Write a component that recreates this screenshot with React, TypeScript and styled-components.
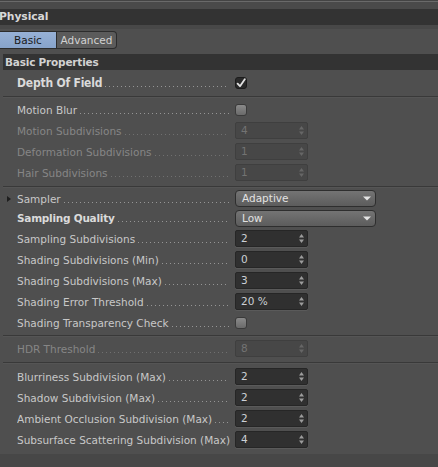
import React from "react";
import styled, { createGlobalStyle, css } from "styled-components";

const Global = createGlobalStyle`
  html, body { margin: 0; padding: 0; background: #4f4f4f; }
  body { font-family: "DejaVu Sans", "Lucida Grande", sans-serif; }
`;

const Panel = styled.div`
  width: 438px;
  height: 467px;
  background: #4f4f4f;
  display: flex;
  flex-direction: column;
  overflow: hidden;
  font-family: "DejaVu Sans", "Lucida Grande", sans-serif;
  font-size: 10.5px;
  color: #c6c6c6;
`;

const TopStrip = styled.div`
  height: 9px;
  flex: none;
  background: linear-gradient(#444 0 1px, #6a6a6a 1px 2px, #4a4a4a 2px);
`;

const PanelTitle = styled.div`
  height: 16px;
  flex: none;
  background: #333;
  color: #d8d8d8;
  font-weight: bold;
  font-size: 10.8px;
  line-height: 16px;
  text-indent: -1px;
  letter-spacing: -0.1px;
`;

const TitleShadow = styled.div`
  height: 4px;
  flex: none;
  background: #484848;
`;

const TabBar = styled.div`
  height: 25px;
  flex: none;
  box-sizing: border-box;
  padding-top: 2px;
  display: flex;
  align-items: flex-start;
`;

const Tab = styled.div<{ $active?: boolean }>`
  height: 18px;
  box-sizing: border-box;
  line-height: 16px;
  border: 1px solid #2c2c2c;
  text-align: center;
  ${(p) =>
    p.$active
      ? css`
          width: 57px;
          background: linear-gradient(#97b1d6, #87a3ca);
          color: #1a1a1a;
          border-left: none;
        `
      : css`
          width: 60px;
          background: #5b5b5b;
          color: #d2d2d2;
          border-left: none;
          border-radius: 0 4px 4px 0;
        `}
`;

const GroupHeader = styled.div`
  margin-left: 3px;
  height: 16px;
  flex: none;
  background: #333;
  color: #d2d2d2;
  font-weight: bold;
  line-height: 16px;
  padding-left: 2px;
  letter-spacing: -0.2px;
`;

const Section = styled.div<{ $top: number; $bottom: number }>`
  padding-top: ${(p) => p.$top}px;
  padding-bottom: ${(p) => p.$bottom}px;
  flex: none;
`;

const Separator = styled.div`
  margin-left: 3px;
  height: 2px;
  flex: none;
  background: linear-gradient(#393939 0 1px, #555 1px);
`;

const Footer = styled.div`
  flex: 1;
  background: #474747;
`;

const Row = styled.div<{ $h: number }>`
  height: ${(p) => p.$h}px;
  display: grid;
  grid-template-columns: 17px 214px auto;
  align-items: center;
`;

const Expander = styled.span`
  justify-self: start;
  margin-left: 7px;
  width: 0;
  height: 0;
  border-top: 3px solid transparent;
  border-bottom: 3px solid transparent;
  border-left: 4px solid #1e1e1e;
`;

type Weight = "normal" | "bold" | "big";

const Label = styled.div<{ $weight: Weight; $disabled?: boolean }>`
  display: flex;
  align-items: baseline;
  white-space: nowrap;
  overflow: hidden;
  line-height: 14px;
  color: ${(p) => (p.$disabled ? "#868686" : p.$weight === "normal" ? "#c8c8c8" : "#dadada")};
  ${(p) =>
    p.$weight === "bold" &&
    css`
      font-weight: bold;
      letter-spacing: -0.25px;
    `}
  ${(p) =>
    p.$weight === "big" &&
    css`
      font-family: "DejaVu Sans Condensed", "DejaVu Sans", sans-serif;
      font-stretch: condensed;
      font-weight: bold;
      font-size: 12px;
      letter-spacing: -0.2px;
    `}
`;

const Leader = styled.span<{ $disabled?: boolean }>`
  flex: 1;
  height: 1px;
  margin-left: 3px;
  margin-right: 2px;
  background-image: linear-gradient(
    to right,
    ${(p) => (p.$disabled ? "#707070" : "#959595")} 1px,
    transparent 1px
  );
  background-size: 4px 1px;
  background-repeat: repeat-x;
`;

const ControlCell = styled.div`
  margin-left: 4px;
  display: flex;
  align-items: center;
`;

const CheckBox = styled.div<{ $checked?: boolean }>`
  width: 12px;
  height: 12px;
  box-sizing: border-box;
  border-radius: 3px;
  display: flex;
  align-items: center;
  justify-content: center;
  ${(p) =>
    p.$checked
      ? css`
          background: #2a2a2a;
          border: 1px solid #1c1c1c;
        `
      : css`
          background: linear-gradient(#8a8a8a, #6a6a6a);
          border: 1px solid #3a3a3a;
        `}
`;

const NumBox = styled.div<{ $disabled?: boolean }>`
  width: 73px;
  height: 17px;
  box-sizing: border-box;
  border-radius: 2px;
  display: flex;
  align-items: center;
  justify-content: space-between;
  padding: 0 3px 0 5px;
  line-height: 15px;
  ${(p) =>
    p.$disabled
      ? css`
          background: #474747;
          border: 1px solid #3f3f3f;
          color: #737373;
        `
      : css`
          background: #303030;
          border: 1px solid #262626;
          box-shadow: 0 1px 0 #5a5a5a;
          color: #ccd0d6;
        `}
`;

const Select = styled.div`
  width: 141px;
  height: 17px;
  box-sizing: border-box;
  border-radius: 4px;
  border: 1px solid #2e2e2e;
  background: linear-gradient(#747474, #5c5c5c);
  color: #e2e2e2;
  display: flex;
  align-items: center;
  justify-content: space-between;
  padding: 0 4px 0 6px;
  line-height: 15px;
`;

const Spinner = ({ disabled }: { disabled?: boolean }) => (
  <svg width="5" height="9" viewBox="0 0 5 9">
    <g fill={disabled ? "#666" : "#9c9c9c"}>
      <polygon points="0,3.6 2.5,0 5,3.6" />
      <polygon points="0,5.4 2.5,9 5,5.4" />
    </g>
  </svg>
);

const DownArrow = () => (
  <svg width="8" height="5" viewBox="0 0 8 5">
    <polygon points="0,0.5 8,0.5 4,4.5" fill="#e4e4e4" />
  </svg>
);

const CheckMark = () => (
  <svg width="10" height="10" viewBox="0 0 10 10">
    <path d="M1.6 5.6 L4 8.2 L8.8 1.2" fill="none" stroke="#e2e2e2" strokeWidth="1.8" strokeLinejoin="round" strokeLinecap="round" />
  </svg>
);

type Control =
  | { kind: "check"; checked?: boolean }
  | { kind: "num"; value: string; disabled?: boolean }
  | { kind: "select"; value: string };

type RowDef = {
  label: string;
  weight?: Weight;
  disabled?: boolean;
  arrow?: boolean;
  h?: number;
  leader?: boolean;
  control: Control;
};

const renderControl = (c: Control) => {
  if (c.kind === "check")
    return <CheckBox $checked={c.checked}>{c.checked && <CheckMark />}</CheckBox>;
  if (c.kind === "num")
    return (
      <NumBox $disabled={c.disabled}>
        <span>{c.value}</span>
        <Spinner disabled={c.disabled} />
      </NumBox>
    );
  return (
    <Select>
      <span>{c.value}</span>
      <DownArrow />
    </Select>
  );
};

const PropRow = ({ r }: { r: RowDef }) => (
  <Row $h={r.h ?? 21}>
    {r.arrow ? <Expander /> : <span />}
    <Label $weight={r.weight ?? "normal"} $disabled={r.disabled}>
      <span>{r.label}</span>
      {r.leader !== false && <Leader $disabled={r.disabled} />}
    </Label>
    <ControlCell>{renderControl(r.control)}</ControlCell>
  </Row>
);

const sections: { top: number; bottom: number; rows: RowDef[] }[] = [
  {
    top: 3,
    bottom: 3,
    rows: [{ label: "Depth Of Field", weight: "big", h: 20, control: { kind: "check", checked: true } }],
  },
  {
    top: 1,
    bottom: 3,
    rows: [
      { label: "Motion Blur", control: { kind: "check" } },
      { label: "Motion Subdivisions", disabled: true, control: { kind: "num", value: "4", disabled: true } },
      { label: "Deformation Subdivisions", disabled: true, control: { kind: "num", value: "1", disabled: true } },
      { label: "Hair Subdivisions", disabled: true, control: { kind: "num", value: "1", disabled: true } },
    ],
  },
  {
    top: 1,
    bottom: 2,
    rows: [
      { label: "Sampler", arrow: true, h: 19, control: { kind: "select", value: "Adaptive" } },
      { label: "Sampling Quality", weight: "bold", h: 20, control: { kind: "select", value: "Low" } },
      { label: "Sampling Subdivisions", control: { kind: "num", value: "2" } },
      { label: "Shading Subdivisions (Min)", control: { kind: "num", value: "0" } },
      { label: "Shading Subdivisions (Max)", control: { kind: "num", value: "3" } },
      { label: "Shading Error Threshold", control: { kind: "num", value: "20 %" } },
      { label: "Shading Transparency Check", control: { kind: "check" } },
    ],
  },
  {
    top: 1,
    bottom: 3,
    rows: [{ label: "HDR Threshold", disabled: true, control: { kind: "num", value: "8", disabled: true } }],
  },
  {
    top: 2,
    bottom: 4,
    rows: [
      { label: "Blurriness Subdivision (Max)", control: { kind: "num", value: "2" } },
      { label: "Shadow Subdivision (Max)", control: { kind: "num", value: "2" } },
      { label: "Ambient Occlusion Subdivision (Max)", control: { kind: "num", value: "2" } },
      { label: "Subsurface Scattering Subdivision (Max)", leader: false, control: { kind: "num", value: "4" } },
    ],
  },
];

export default function App() {
  return (
    <>
      <Global />
      <Panel>
        <TopStrip />
        <PanelTitle>Physical</PanelTitle>
        <TitleShadow />
        <TabBar>
          <Tab $active>Basic</Tab>
          <Tab>Advanced</Tab>
        </TabBar>
        <GroupHeader>Basic Properties</GroupHeader>
        {sections.map((s, i) => (
          <React.Fragment key={i}>
            {i > 0 && <Separator />}
            <Section $top={s.top} $bottom={s.bottom}>
              {s.rows.map((r) => (
                <PropRow key={r.label} r={r} />
              ))}
            </Section>
          </React.Fragment>
        ))}
        <Footer />
      </Panel>
    </>
  );
}
